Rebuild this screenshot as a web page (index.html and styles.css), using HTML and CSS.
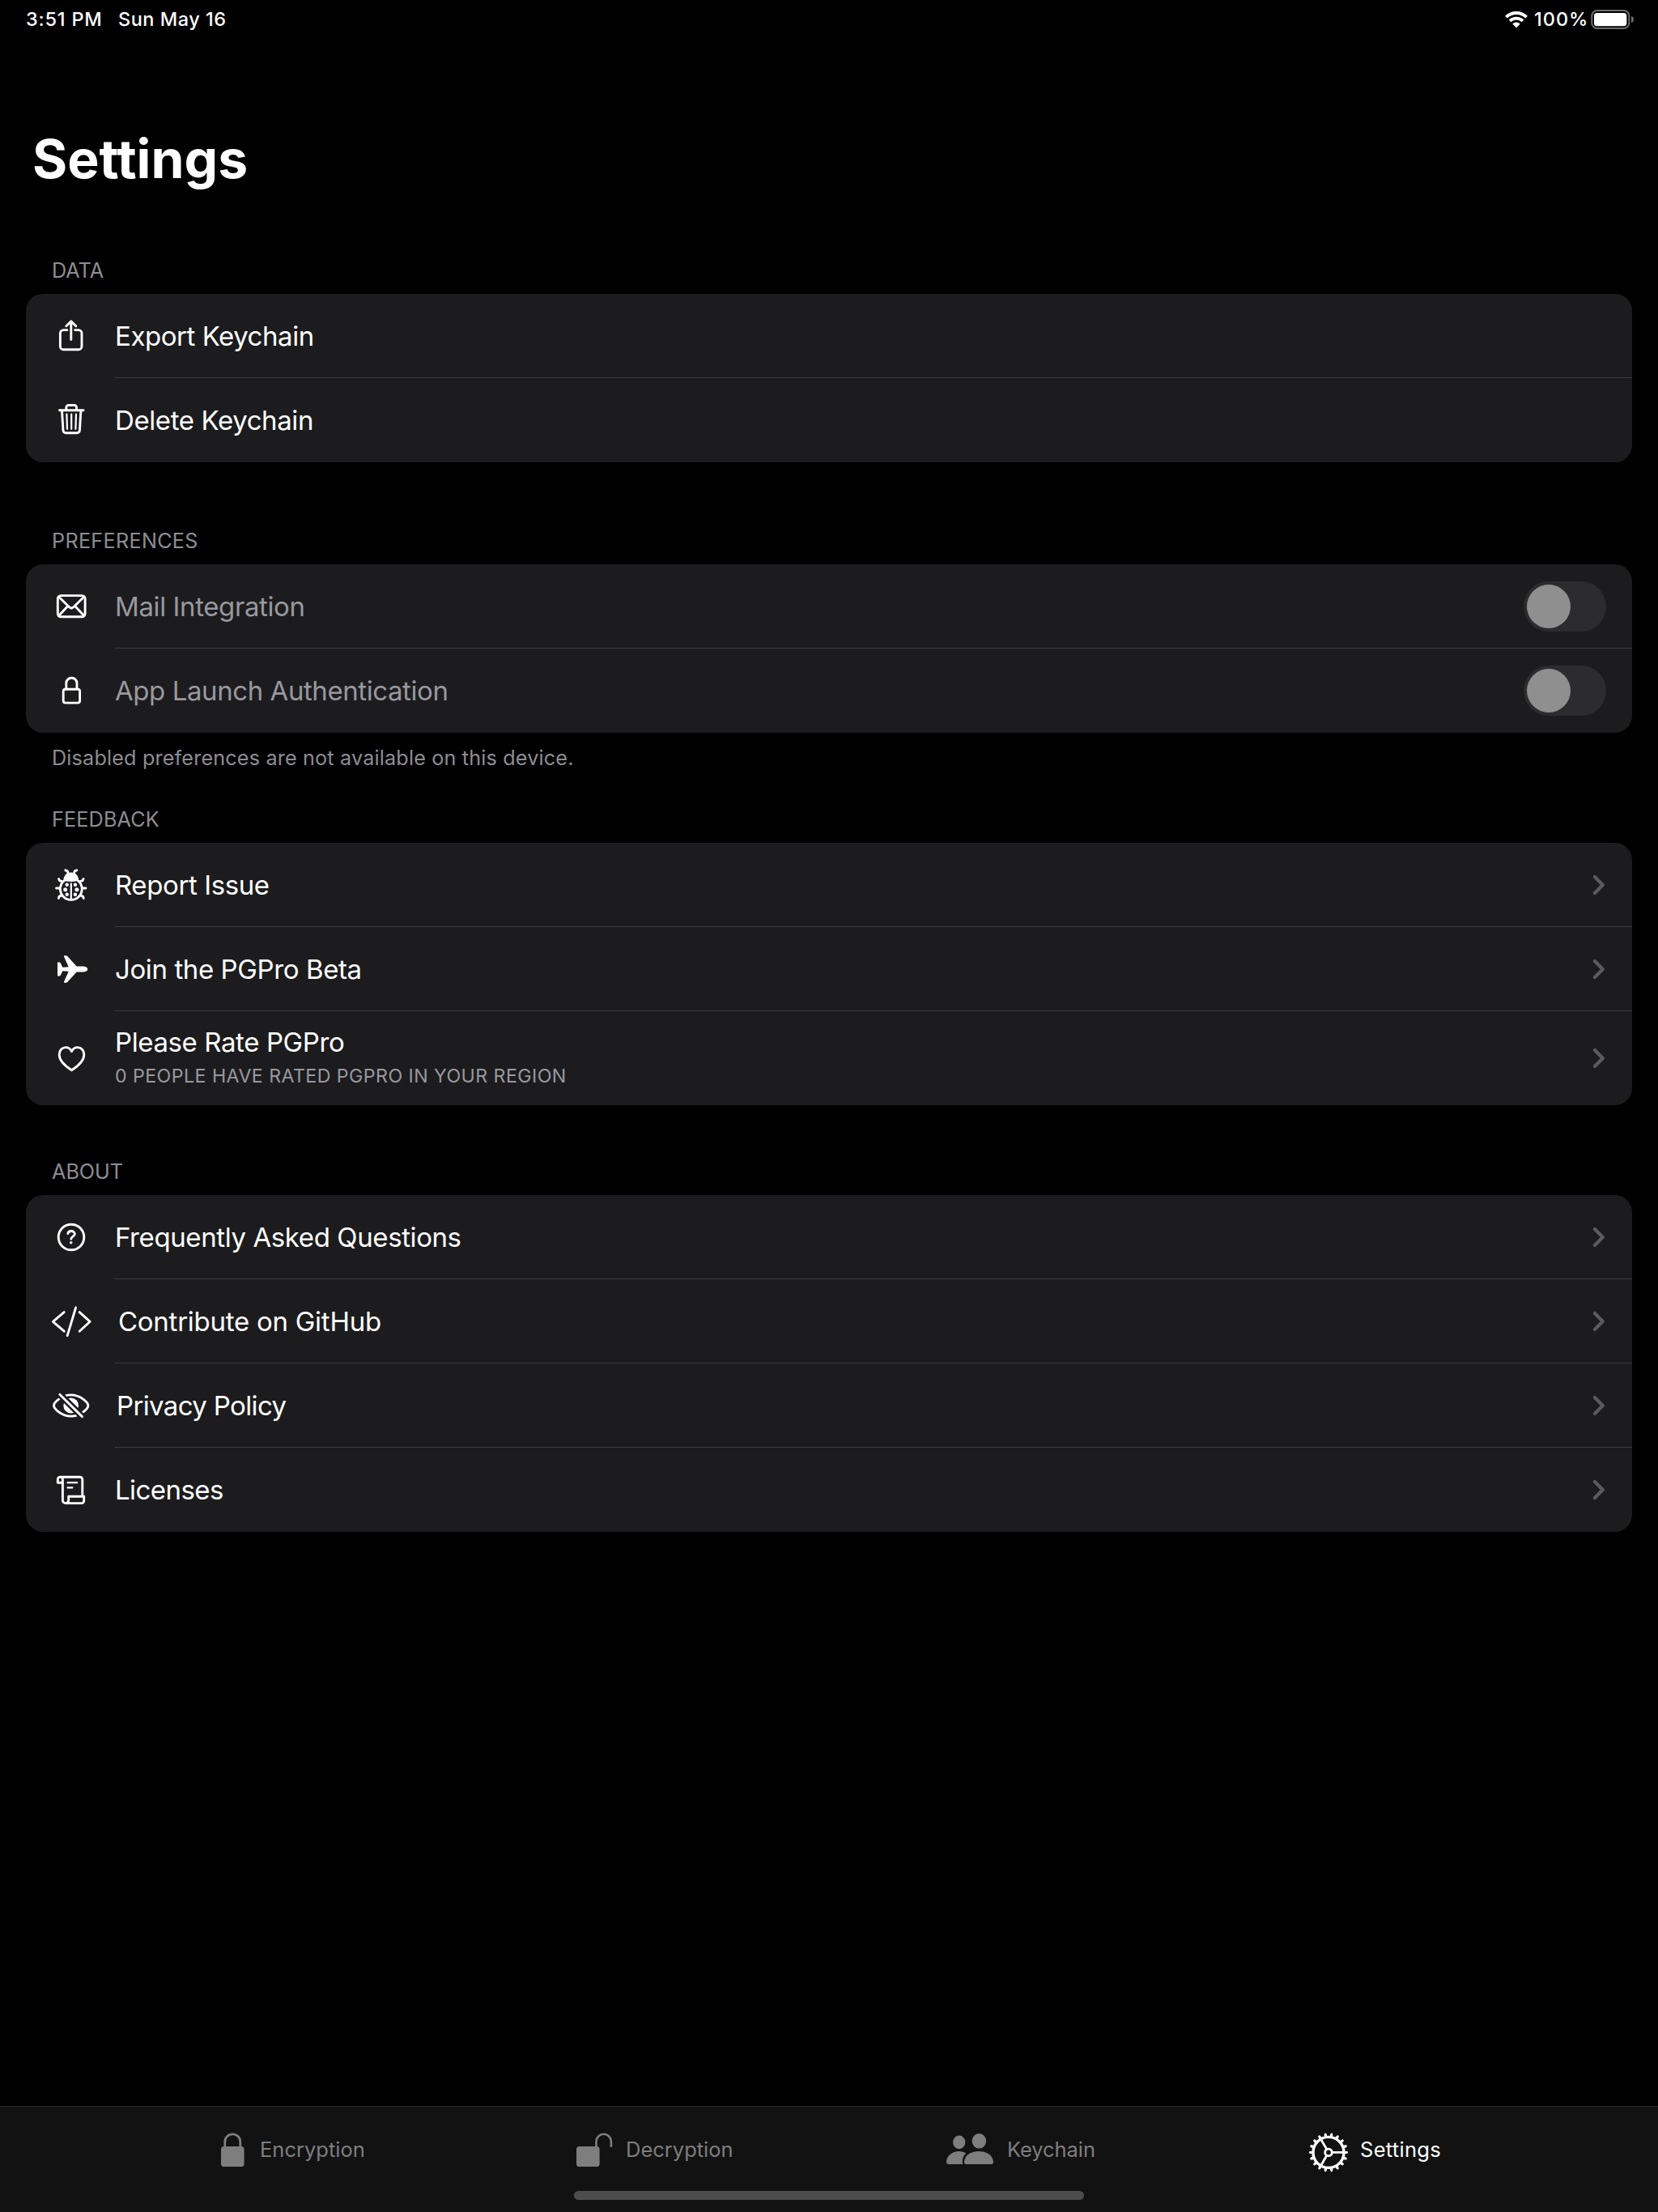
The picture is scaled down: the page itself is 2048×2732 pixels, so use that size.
FILE: index.html
```html
<!DOCTYPE html>
<html lang="en">
<head>
<meta charset="utf-8">
<title>Settings</title>
<link rel="stylesheet" href="styles.css">
</head>
<body>
<svg class="defs" width="0" height="0" aria-hidden="true">
  <symbol id="chevron" viewBox="0 0 18 26"><path d="M3.9 3 13.8 13 3.9 23" fill="none" stroke="#5b5b5f" stroke-width="4.2" stroke-linecap="round" stroke-linejoin="round"/></symbol>
</svg>

<header class="statusbar">
  <span class="time">3:51 PM</span>
  <span class="date">Sun May 16</span>
  <svg class="wifi" viewBox="0 0 28 22"><g fill="none" stroke="#fff"><path d="M1.4 8.1A18.2 18.2 0 0 1 26.6 8.1" stroke-width="4"/><path d="M6 12.9A11.6 11.6 0 0 1 22 12.9" stroke-width="3.7"/></g><path d="M14 21 9.6 16.6A6.4 6.4 0 0 1 18.4 16.6Z" fill="#fff" stroke="#fff" stroke-width=".6"/></svg>
  <span class="percent">100%</span>
  <svg class="battery" viewBox="0 0 54 24"><rect x="1.3" y="1" width="46" height="22" rx="6.6" fill="none" stroke="#6d6d6d" stroke-width="2"/><rect x="4" y="4" width="40.3" height="16.3" rx="3.6" fill="#fff"/><path d="M50 7.8C52 8.6 53 10 53 11.9S52 15.2 50 16Z" fill="#6d6d6d"/></svg>
</header>

<main class="page">
  <h1 class="title">Settings</h1>

  <section class="section">
    <h2 class="heading">DATA</h2>
    <div class="card">
      <div class="row">
        <svg class="icon" viewBox="0 0 52 52"><path d="M21 18.6H16.4a4 4 0 0 0-4 4V38.7a4 4 0 0 0 4 4H35a4 4 0 0 0 4-4V22.6a4 4 0 0 0-4-4H30.6M25.8 30.6V8.2M19.8 13.8 25.8 7.9 31.8 13.8"/></svg>
        <div class="body"><span class="label export">Export Keychain</span></div>
      </div>
      <div class="row">
        <svg class="icon" viewBox="0 0 52 52"><path d="M11.5 13.8H41M19.8 13.4V10.4a2.9 2.9 0 0 1 2.9-2.9H29.7a2.9 2.9 0 0 1 2.9 2.9V13.4M14.5 14 16 38.6a3.2 3.2 0 0 0 3.2 3.1H33.2a3.2 3.2 0 0 0 3.2-3.1L37.9 14"/><path class="thin" d="M20.4 18.6 21 36.8M26.2 18.6V36.8M32 18.6 31.4 36.8"/></svg>
        <div class="body"><span class="label">Delete Keychain</span></div>
      </div>
    </div>
  </section>

  <section class="section">
    <h2 class="heading wide">PREFERENCES</h2>
    <div class="card">
      <div class="row disabled">
        <svg class="icon" viewBox="0 0 52 52"><rect x="9.3" y="12.6" width="33.8" height="26.2" rx="4"/><path d="M10.5 14 23.5 26.8Q26.2 29.4 28.9 26.8L41.9 14M10.6 37.6 21.8 25.6M41.8 37.6 30.6 25.6"/></svg>
        <div class="body"><span class="label">Mail Integration</span><span class="toggle"></span></div>
      </div>
      <div class="row disabled">
        <svg class="icon" viewBox="0 0 52 52"><rect x="16.2" y="24.2" width="20.4" height="16.9" rx="2.6"/><path d="M19.8 24V16.8a6.6 6.6 0 0 1 13.2 0V24"/></svg>
        <div class="body"><span class="label launch">App Launch Authentication</span><span class="toggle"></span></div>
      </div>
    </div>
    <p class="footnote">Disabled preferences are not available on this device.</p>
  </section>

  <section class="section after-note">
    <h2 class="heading feedback">FEEDBACK</h2>
    <div class="card">
      <div class="row">
        <svg class="icon" viewBox="0 0 52 52"><ellipse cx="25.8" cy="31" rx="13.4" ry="13.4"/><path d="M14.5 21.6 11.6 20.6 10.6 18.6M37.1 21.6 40 20.6 41 18.6M12 30H7.6M39.6 30H44M14.4 38.6 11 40.4 10.4 42.4M37.2 38.6 40.6 40.4 41.2 42.4M18.8 7.8 21.4 8.8 22.2 12M32.8 7.8 30.2 8.8 29.4 12"/><path class="thin" d="M25.8 24.4V43.4"/><path class="solid" d="M16.4 20.6C16.4 14.6 20.4 10.6 25.8 10.6S35.2 14.6 35.2 20.6C32 22.3 19.6 22.3 16.4 20.6Z"/><g class="solid"><circle cx="20.7" cy="25.7" r="2.2"/><circle cx="18.7" cy="31.7" r="2.5"/><circle cx="20.7" cy="37.8" r="2.2"/><circle cx="30.9" cy="25.7" r="2.2"/><circle cx="32.9" cy="31.7" r="2.5"/><circle cx="30.9" cy="37.8" r="2.2"/></g></svg>
        <div class="body"><span class="label">Report Issue</span><svg class="chevron"><use href="#chevron"/></svg></div>
      </div>
      <div class="row">
        <svg class="icon" viewBox="0 0 52 52"><path class="solid" d="M9 17.6H11.2Q12.2 17.6 12.8 18.6L15.4 23.7 22.7 23.2 17 10.6Q16.5 9.2 18 9.2H19.6Q20.6 9.2 21.3 10L32.6 22.5H41.2Q46.3 23.2 46.3 26T41.2 29.5H32.6L21.3 42Q20.6 42.8 19.6 42.8H18Q16.5 42.8 17 41.4L22.7 28.8 15.4 28.3 12.8 33.4Q12.2 34.4 11.2 34.4H9Z"/></svg>
        <div class="body"><span class="label">Join the PGPro Beta</span><svg class="chevron"><use href="#chevron"/></svg></div>
      </div>
      <div class="row tall">
        <svg class="icon" viewBox="0 0 52 52"><path d="M26.5 40.8C21.5 37.6 11.2 30.3 11.2 21.5 11.2 16.2 14.8 12.6 19.2 12.6 22.5 12.6 25 14.4 26.5 17.6 28 14.4 30.5 12.6 33.8 12.6 38.2 12.6 41.8 16.2 41.8 21.5 41.8 30.3 31.5 37.6 26.5 40.8Z"/></svg>
        <div class="body"><div class="stack"><span class="label">Please Rate PGPro</span><span class="sub">0 PEOPLE HAVE RATED PGPRO IN YOUR REGION</span></div><svg class="chevron"><use href="#chevron"/></svg></div>
      </div>
    </div>
  </section>

  <section class="section after-tall">
    <h2 class="heading">ABOUT</h2>
    <div class="card">
      <div class="row">
        <svg class="icon" viewBox="0 0 52 52"><circle cx="26" cy="26" r="15.8"/><path d="M21.9 21.6C22.1 19.8 23.6 18.5 26 18.5 28.5 18.5 30.3 20 30.3 22.1 30.3 25 25.8 25.2 25.8 28.2"/><circle class="solid" cx="25.7" cy="32.8" r="1.8"/></svg>
        <div class="body"><span class="label">Frequently Asked Questions</span><svg class="chevron"><use href="#chevron"/></svg></div>
      </div>
      <div class="row">
        <svg class="icon" viewBox="0 0 52 52"><path d="M17.2 14.6 3.4 26.3 17.2 38.2M36.2 14.6 49.2 26.3 36.2 38.2M31.6 9 21.2 43.6"/></svg>
        <div class="body"><span class="label github">Contribute on GitHub</span><svg class="chevron"><use href="#chevron"/></svg></div>
      </div>
      <div class="row">
        <svg class="icon" viewBox="0 0 52 52"><path d="M4.5 26C4.5 22.5 13.5 12.9 25.7 12.9S46.9 22.5 46.9 26 37.9 39.1 25.7 39.1 4.5 29.5 4.5 26Z"/><circle class="solid" cx="25.7" cy="26" r="9.4"/><path class="gap" d="M10 10.4 41.3 41.3"/><path d="M11.8 12.2 39.5 39.6"/></svg>
        <div class="body"><span class="label privacy">Privacy Policy</span><svg class="chevron"><use href="#chevron"/></svg></div>
      </div>
      <div class="row">
        <svg class="icon" viewBox="0 0 52 52"><path d="M15.4 17.2H9.3V13.2a3 3 0 0 1 6.1 0V39a3.6 3.6 0 0 0 3.6 3.6H38.7a3 3 0 0 0 3-3V34.2H22.7V38.6a3.8 3.8 0 0 1-3.6 4M12.3 10.2H36.8a3 3 0 0 1 3 3V34"/><path class="thin" d="M21.6 17.2H33.2M21.6 23.4H27.4"/></svg>
        <div class="body"><span class="label licenses">Licenses</span><svg class="chevron"><use href="#chevron"/></svg></div>
      </div>
    </div>
  </section>
</main>

<nav class="tabbar">
  <div class="tabs">
    <div class="tab first">
      <svg width="30" height="48" viewBox="0 0 30 48"><rect x="0" y="20" width="28.6" height="25" rx="3.6" fill="currentColor"/><path d="M4.8 21V14.3a9.5 9.5 0 0 1 19 0V21" fill="none" stroke="currentColor" stroke-width="2.8"/></svg>
      <span>Encryption</span>
    </div>
    <div class="tab">
      <svg width="44" height="48" viewBox="0 0 44 48"><rect x="0" y="20" width="28.6" height="25" rx="3.6" fill="currentColor"/><path d="M24.5 21V14a9.2 9.2 0 0 1 18.4 0V19.8" fill="none" stroke="currentColor" stroke-width="2.6" stroke-linecap="round"/></svg>
      <span>Decryption</span>
    </div>
    <div class="tab keychain">
      <svg width="58" height="48" viewBox="0 0 58 48" fill="currentColor"><ellipse cx="15.7" cy="14.9" rx="7.6" ry="8.3"/><ellipse cx="40.4" cy="13.3" rx="8.7" ry="9.3"/><path d="M3 42Q0 42 0 38.8C.5 31.5 7 26 15.5 26 19 26 22 27 24.3 28.4 21 31.5 19.3 35 20 42Z"/><path d="M24.6 42Q21.7 42 21.9 39C22.8 31 30 26 40 26S57.2 31 58 39Q58.2 42 55.3 42Z"/></svg>
      <span>Keychain</span>
    </div>
    <div class="tab active">
      <svg width="46" height="48" viewBox="0 0 46 48" fill="none" stroke="currentColor"><circle cx="24" cy="27.4" r="19" stroke-width="3.4"/><circle cx="24" cy="27.4" r="21.4" stroke-width="2.4" pathLength="360" stroke-dasharray="9 11" stroke-dashoffset="4.5"/><circle cx="24" cy="27.4" r="23" stroke-width="2" pathLength="360" stroke-dasharray="6 14" stroke-dashoffset="3"/><circle cx="24" cy="27.4" r="4.3" stroke-width="2.8"/><path d="M28.5 27.4H43M21.8 23.5 14.5 11M21.8 31.3 14.5 43.8" stroke-width="2.8"/></svg>
      <span>Settings</span>
    </div>
  </div>
  <div class="home-indicator"></div>
</nav>
</body>
</html>
```
FILE: styles.css
```css
* { box-sizing: border-box; }

body {
  margin: 0;
  width: 2048px;
  height: 2732px;
  display: flex;
  flex-direction: column;
  overflow: hidden;
  background: #000;
  color: #fff;
  font-family: Inter, "Liberation Sans", sans-serif;
}

h1, h2, p { margin: 0; }
svg { display: block; flex: none; overflow: visible; }
.defs { position: absolute; }

/* Status bar */
.statusbar {
  height: 47px;
  padding: 0 29px 0 32px;
  display: flex;
  align-items: center;
  font-size: 23.5px;
  font-weight: 460;
  line-height: 47px;
  white-space: nowrap;
}
.time { width: 114px; letter-spacing: .8px; }
.date { letter-spacing: .5px; }
.wifi { width: 28px; height: 22px; margin-left: auto; }
.percent { width: 70px; margin-left: 8px; letter-spacing: 1px; }
.battery { width: 54px; height: 24px; margin-top: 1px; }

/* Page */
.page { flex: 1; padding: 109px 32px 0; }
.title {
  padding-left: 8px;
  font-size: 66px;
  font-weight: 700;
  line-height: 80px;
  letter-spacing: 0;
}

.section { margin-top: 80px; }
.title + .section { margin-top: 81px; }
.section.after-note { margin-top: 42px; }
.section.after-tall { margin-top: 65px; }

.heading, .footnote {
  padding-left: 32px;
  font-size: 25.2px;
  font-weight: 400;
  line-height: 34px;
  color: #8d8d93;
}
.heading.wide { letter-spacing: .3px; }
.heading.feedback { letter-spacing: .15px; }
.footnote { margin-top: 14px; letter-spacing: .165px; }

.card {
  margin-top: 12px;
  border-radius: 21px;
  overflow: hidden;
  background: #1c1c1e;
}

.row {
  height: 104px;
  padding-left: 30px;
  display: flex;
  align-items: center;
  gap: 28px;
}
.row.tall { height: 116px; }

.icon {
  width: 52px;
  height: 52px;
  fill: none;
  stroke: #fff;
  stroke-width: 2.9;
  stroke-linecap: round;
  stroke-linejoin: round;
}
.icon .thin { stroke-width: 2.2; }
.icon .solid { fill: #fff; stroke: none; }
.icon .gap { stroke: #1c1c1e; stroke-width: 8; stroke-linecap: butt; }

.body {
  flex: 1;
  height: 100%;
  padding: 1px 32px 0 0;
  display: flex;
  align-items: center;
  justify-content: space-between;
  border-bottom: 1px solid #3d3d40;
}
.row:last-child .body { border-bottom-color: transparent; }

.label {
  font-size: 33px;
  line-height: 42px;
  letter-spacing: -.4px;
}
.label.export { letter-spacing: -.46px; }
.label.launch { letter-spacing: -.43px; }
.label.github { padding-left: 4px; letter-spacing: -.26px; }
.label.privacy { padding-left: 2px; letter-spacing: -.64px; }
.label.licenses { letter-spacing: -.55px; }
.disabled .label { color: #98989f; }

.stack { display: flex; flex-direction: column; padding-top: 2px; }
.sub {
  font-size: 23.2px;
  line-height: 42px;
  letter-spacing: .43px;
  color: #98989f;
}

.chevron { width: 18px; height: 26px; }

.toggle {
  width: 102px;
  height: 62px;
  padding: 4px;
  border-radius: 31px;
  background: #2c2c2e;
}
.toggle::before {
  content: "";
  display: block;
  width: 54px;
  height: 54px;
  border-radius: 50%;
  background: #8f8f8f;
}

/* Tab bar */
.tabbar {
  height: 131px;
  border-top: 1px solid #2b2b2b;
  background: #121212;
}
.tabs {
  height: 106px;
  padding-left: 273px;
  display: grid;
  grid-template-columns: 439px 457px 448px auto;
  align-items: center;
  font-size: 25.5px;
  line-height: 32px;
  color: #7e7e7e;
}
.tab { display: flex; align-items: center; gap: 17px; }
.tab.first { gap: 18px; }
.tab.keychain { letter-spacing: -.08px; }
.tab.active { color: #fff; letter-spacing: .3px; }
.home-indicator {
  width: 630px;
  height: 11px;
  margin: -2px auto 0;
  border-radius: 5.5px;
  background: #4c4c4c;
}
```
